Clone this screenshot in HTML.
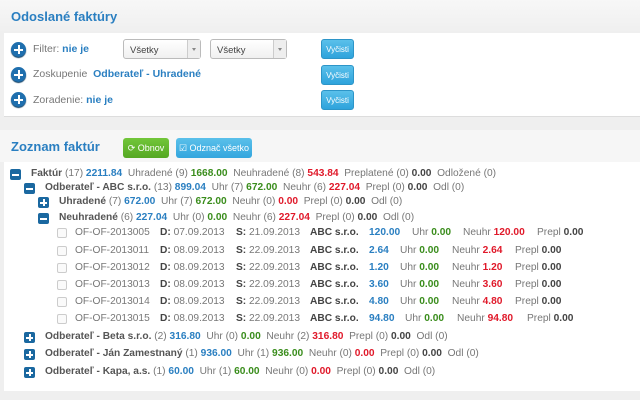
<!DOCTYPE html>
<html><head><meta charset="utf-8"><style>
*{margin:0;padding:0;box-sizing:border-box}
body{width:640px;height:400px;background:#efefef;font-family:"Liberation Sans",sans-serif;font-size:10px;color:#777;position:relative;overflow:hidden}
.a{position:absolute;white-space:nowrap}
.h{color:#2a7fc1;font-size:13px;font-weight:bold}
.circ{position:absolute;width:15px;height:15px;border-radius:50%;background:#1f6fae;box-shadow:0 1px 1px #0a3a60}
.circ:before{content:"";position:absolute;left:3px;top:6.5px;width:9px;height:2px;background:#fff}
.circ:after{content:"";position:absolute;left:6.5px;top:3px;width:2px;height:9px;background:#fff}
.sel{position:absolute;height:20px;border:1px solid #bbb;border-radius:3px;background:linear-gradient(#fff,#f0f0f0);font-size:9.5px;color:#444;padding:5px 0 0 6px}
.sel i{position:absolute;right:0;top:0;width:13px;height:18px;border-left:1px solid #ccc;background:#eee}
.sel i:after{content:"";position:absolute;left:4px;top:8px;border:2.5px solid transparent;border-top:3px solid #888}
.btn{position:absolute;width:33px;height:20px;border-radius:3px;background:linear-gradient(#5ac0ea,#2ea3dc);color:#fff;font-size:8px;text-align:center;line-height:20px;border:1px solid #2d95c8}
.sq{position:absolute;width:11px;height:11px;border-radius:2px;background:#1a68a0}
.sq:before{content:"";position:absolute;left:2px;top:4.5px;width:7px;height:2px;background:#fff}
.sq.p:after{content:"";position:absolute;left:4.5px;top:2px;width:2px;height:7px;background:#fff}
.r{position:absolute;white-space:nowrap;font-size:10.2px;line-height:12px;color:#777}
b{color:#555}
.bl{color:#2a7fc1;font-weight:bold}
.gr{color:#3a8d1c;font-weight:bold}
.rd{color:#e0192a;font-weight:bold}
.dk{color:#444;font-weight:bold}
.cb{position:absolute;width:10px;height:10px;border:1px solid #ccc;border-radius:2px;background:#fafafa}
</style></head><body>
<div class="a" style="left:0;top:0;width:640px;height:33px;background:linear-gradient(#f7f7f7,#efefef)"></div>
<div class="a h" style="left:11px;top:9px">Odoslané faktúry</div>
<div class="a" style="left:4px;top:33px;width:636px;height:84px;background:#fff;border-bottom:1px solid #ddd"></div>
<div class="circ" style="left:11px;top:42px"></div>
<div class="circ" style="left:11px;top:67px"></div>
<div class="circ" style="left:11px;top:92px"></div>
<div class="a" style="left:33px;top:43px;font-size:10.5px">Filter: <span class="bl">nie je</span></div>
<div class="a" style="left:33px;top:68px;font-size:10.5px">Zoskupenie &nbsp;<span class="bl">Odberateľ - Uhradené</span></div>
<div class="a" style="left:33px;top:94px;font-size:10.5px">Zoradenie: <span class="bl">nie je</span></div>
<div class="sel" style="left:123px;top:39px;width:78px">Všetky<i></i></div>
<div class="sel" style="left:210px;top:39px;width:77px">Všetky<i></i></div>
<div class="btn" style="left:321px;top:39px">Vyčisti</div>
<div class="btn" style="left:321px;top:65px">Vyčisti</div>
<div class="btn" style="left:321px;top:90px">Vyčisti</div>
<div class="a" style="left:0;top:130px;width:640px;height:32px;background:#f6f6f6"></div>
<div class="a h" style="left:11px;top:139px">Zoznam faktúr</div>
<div class="a" style="left:123px;top:138px;width:46px;height:20px;border-radius:3px;background:linear-gradient(#72c63a,#55a823);color:#fff;font-size:9px;line-height:20px;text-align:center">⟳ Obnov</div>
<div class="a" style="left:176px;top:138px;width:76px;height:20px;border-radius:3px;background:linear-gradient(#5ac0ea,#34a6de);color:#fff;font-size:9px;line-height:20px;text-align:center">☑ Odznač všetko</div>
<div class="a" style="left:4px;top:162px;width:636px;height:229px;background:#fff"></div>

<div class="sq" style="left:10px;top:169px"></div>
<div class="r" style="left:31px;top:168px"><b>Faktúr</b> (17) <span class="bl">2211.84</span> &nbsp;Uhradené (9) <span class="gr">1668.00</span> &nbsp;Neuhradené (8) <span class="rd">543.84</span> &nbsp;Preplatené (0) <span class="dk">0.00</span> &nbsp;Odložené (0)</div>
<div class="sq" style="left:24px;top:183px"></div>
<div class="r" style="left:45px;top:182px"><b>Odberateľ - ABC s.r.o.</b> (13) <span class="bl">899.04</span> &nbsp;Uhr (7) <span class="gr">672.00</span> &nbsp;Neuhr (6) <span class="rd">227.04</span> &nbsp;Prepl (0) <span class="dk">0.00</span> &nbsp;Odl (0)</div>
<div class="sq p" style="left:38px;top:197px"></div>
<div class="r" style="left:59px;top:196px"><b>Uhradené</b> (7) <span class="bl">672.00</span> &nbsp;Uhr (7) <span class="gr">672.00</span> &nbsp;Neuhr (0) <span class="rd">0.00</span> &nbsp;Prepl (0) <span class="dk">0.00</span> &nbsp;Odl (0)</div>
<div class="sq" style="left:38px;top:213px"></div>
<div class="r" style="left:59px;top:212px"><b>Neuhradené</b> (6) <span class="bl">227.04</span> &nbsp;Uhr (0) <span class="gr">0.00</span> &nbsp;Neuhr (6) <span class="rd">227.04</span> &nbsp;Prepl (0) <span class="dk">0.00</span> &nbsp;Odl (0)</div>

<div class="cb" style="left:57px;top:228px"></div><div class="r" style="left:75px;top:227px">OF-OF-2013005</div><div class="r" style="left:160px;top:227px"><span class="dk">D:</span> 07.09.2013</div><div class="r" style="left:236px;top:227px"><span class="dk">S:</span> 21.09.2013</div><div class="r dk" style="left:310px;top:227px">ABC s.r.o.</div><div class="r bl" style="left:369px;top:227px">120.00</div><div class="r" style="left:412px;top:227px">Uhr <span class="gr">0.00</span></div><div class="r" style="left:463px;top:227px">Neuhr <span class="rd">120.00</span></div><div class="r" style="left:537px;top:227px">Prepl <span class="dk">0.00</span></div>
<div class="cb" style="left:57px;top:246px"></div><div class="r" style="left:75px;top:245px">OF-OF-2013011</div><div class="r" style="left:160px;top:245px"><span class="dk">D:</span> 08.09.2013</div><div class="r" style="left:236px;top:245px"><span class="dk">S:</span> 22.09.2013</div><div class="r dk" style="left:310px;top:245px">ABC s.r.o.</div><div class="r bl" style="left:369px;top:245px">2.64</div><div class="r" style="left:400px;top:245px">Uhr <span class="gr">0.00</span></div><div class="r" style="left:452px;top:245px">Neuhr <span class="rd">2.64</span></div><div class="r" style="left:515px;top:245px">Prepl <span class="dk">0.00</span></div>
<div class="cb" style="left:57px;top:263px"></div><div class="r" style="left:75px;top:262px">OF-OF-2013012</div><div class="r" style="left:160px;top:262px"><span class="dk">D:</span> 08.09.2013</div><div class="r" style="left:236px;top:262px"><span class="dk">S:</span> 22.09.2013</div><div class="r dk" style="left:310px;top:262px">ABC s.r.o.</div><div class="r bl" style="left:369px;top:262px">1.20</div><div class="r" style="left:400px;top:262px">Uhr <span class="gr">0.00</span></div><div class="r" style="left:452px;top:262px">Neuhr <span class="rd">1.20</span></div><div class="r" style="left:515px;top:262px">Prepl <span class="dk">0.00</span></div>
<div class="cb" style="left:57px;top:280px"></div><div class="r" style="left:75px;top:279px">OF-OF-2013013</div><div class="r" style="left:160px;top:279px"><span class="dk">D:</span> 08.09.2013</div><div class="r" style="left:236px;top:279px"><span class="dk">S:</span> 22.09.2013</div><div class="r dk" style="left:310px;top:279px">ABC s.r.o.</div><div class="r bl" style="left:369px;top:279px">3.60</div><div class="r" style="left:400px;top:279px">Uhr <span class="gr">0.00</span></div><div class="r" style="left:452px;top:279px">Neuhr <span class="rd">3.60</span></div><div class="r" style="left:515px;top:279px">Prepl <span class="dk">0.00</span></div>
<div class="cb" style="left:57px;top:297px"></div><div class="r" style="left:75px;top:296px">OF-OF-2013014</div><div class="r" style="left:160px;top:296px"><span class="dk">D:</span> 08.09.2013</div><div class="r" style="left:236px;top:296px"><span class="dk">S:</span> 22.09.2013</div><div class="r dk" style="left:310px;top:296px">ABC s.r.o.</div><div class="r bl" style="left:369px;top:296px">4.80</div><div class="r" style="left:400px;top:296px">Uhr <span class="gr">0.00</span></div><div class="r" style="left:452px;top:296px">Neuhr <span class="rd">4.80</span></div><div class="r" style="left:515px;top:296px">Prepl <span class="dk">0.00</span></div>
<div class="cb" style="left:57px;top:314px"></div><div class="r" style="left:75px;top:313px">OF-OF-2013015</div><div class="r" style="left:160px;top:313px"><span class="dk">D:</span> 08.09.2013</div><div class="r" style="left:236px;top:313px"><span class="dk">S:</span> 22.09.2013</div><div class="r dk" style="left:310px;top:313px">ABC s.r.o.</div><div class="r bl" style="left:369px;top:313px">94.80</div><div class="r" style="left:405px;top:313px">Uhr <span class="gr">0.00</span></div><div class="r" style="left:457px;top:313px">Neuhr <span class="rd">94.80</span></div><div class="r" style="left:527px;top:313px">Prepl <span class="dk">0.00</span></div>

<div class="sq p" style="left:24px;top:332px"></div>
<div class="r" style="left:45px;top:331px"><b>Odberateľ - Beta s.r.o.</b> (2) <span class="bl">316.80</span> &nbsp;Uhr (0) <span class="gr">0.00</span> &nbsp;Neuhr (2) <span class="rd">316.80</span> &nbsp;Prepl (0) <span class="dk">0.00</span> &nbsp;Odl (0)</div>
<div class="sq p" style="left:24px;top:349px"></div>
<div class="r" style="left:45px;top:348px"><b>Odberateľ - Ján Zamestnaný</b> (1) <span class="bl">936.00</span> &nbsp;Uhr (1) <span class="gr">936.00</span> &nbsp;Neuhr (0) <span class="rd">0.00</span> &nbsp;Prepl (0) <span class="dk">0.00</span> &nbsp;Odl (0)</div>
<div class="sq p" style="left:24px;top:367px"></div>
<div class="r" style="left:45px;top:366px"><b>Odberateľ - Kapa, a.s.</b> (1) <span class="bl">60.00</span> &nbsp;Uhr (1) <span class="gr">60.00</span> &nbsp;Neuhr (0) <span class="rd">0.00</span> &nbsp;Prepl (0) <span class="dk">0.00</span> &nbsp;Odl (0)</div>
</body></html>
